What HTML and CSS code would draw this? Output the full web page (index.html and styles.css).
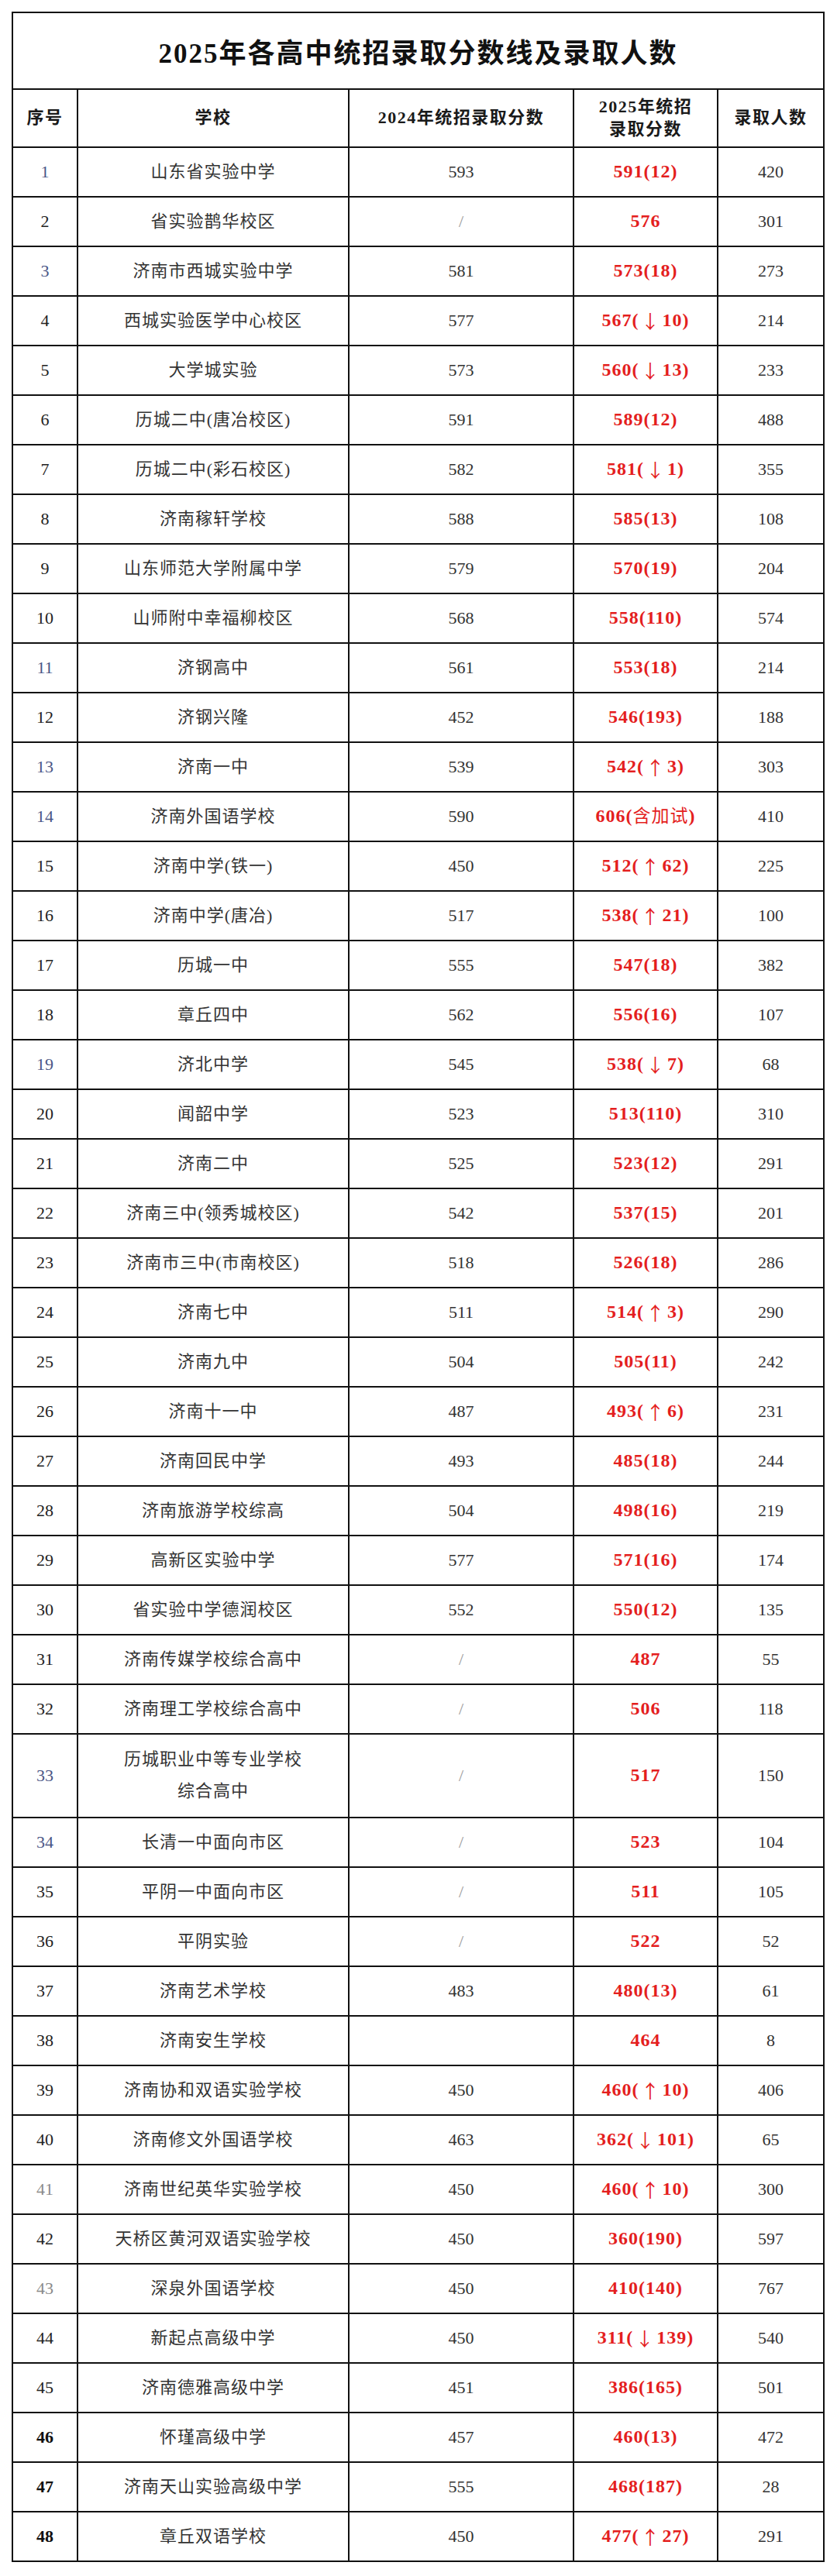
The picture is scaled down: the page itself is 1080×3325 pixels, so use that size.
FILE: index.html
```html
<!DOCTYPE html>
<html lang="zh-CN">
<head>
<meta charset="utf-8">
<title>2025年各高中统招录取分数线及录取人数</title>
<link rel="stylesheet" href="styles.css">
</head>
<body>
<div class="sheet">
  <div class="title">2025年各高中统招录取分数线及录取人数</div>
  <div class="row head">
    <div class="cell">序号</div>
    <div class="cell">学校</div>
    <div class="cell">2024年统招录取分数</div>
    <div class="cell">2025年统招<br>录取分数</div>
    <div class="cell">录取人数</div>
  </div>
  <div class="row"><div class="cell no blue">1</div><div class="cell name">山东省实验中学</div><div class="cell num">593</div><div class="cell red">591(12)</div><div class="cell num">420</div></div>
  <div class="row"><div class="cell no">2</div><div class="cell name">省实验鹊华校区</div><div class="cell slash">/</div><div class="cell red">576</div><div class="cell num">301</div></div>
  <div class="row"><div class="cell no blue">3</div><div class="cell name">济南市西城实验中学</div><div class="cell num">581</div><div class="cell red">573(18)</div><div class="cell num">273</div></div>
  <div class="row"><div class="cell no">4</div><div class="cell name">西城实验医学中心校区</div><div class="cell num">577</div><div class="cell red">567(<span class="arrow">↓</span>10)</div><div class="cell num">214</div></div>
  <div class="row"><div class="cell no">5</div><div class="cell name">大学城实验</div><div class="cell num">573</div><div class="cell red">560(<span class="arrow">↓</span>13)</div><div class="cell num">233</div></div>
  <div class="row"><div class="cell no">6</div><div class="cell name">历城二中(唐冶校区)</div><div class="cell num">591</div><div class="cell red">589(12)</div><div class="cell num">488</div></div>
  <div class="row"><div class="cell no">7</div><div class="cell name">历城二中(彩石校区)</div><div class="cell num">582</div><div class="cell red">581(<span class="arrow">↓</span>1)</div><div class="cell num">355</div></div>
  <div class="row"><div class="cell no">8</div><div class="cell name">济南稼轩学校</div><div class="cell num">588</div><div class="cell red">585(13)</div><div class="cell num">108</div></div>
  <div class="row"><div class="cell no">9</div><div class="cell name">山东师范大学附属中学</div><div class="cell num">579</div><div class="cell red">570(19)</div><div class="cell num">204</div></div>
  <div class="row"><div class="cell no">10</div><div class="cell name">山师附中幸福柳校区</div><div class="cell num">568</div><div class="cell red">558(110)</div><div class="cell num">574</div></div>
  <div class="row"><div class="cell no blue">11</div><div class="cell name">济钢高中</div><div class="cell num">561</div><div class="cell red">553(18)</div><div class="cell num">214</div></div>
  <div class="row"><div class="cell no">12</div><div class="cell name">济钢兴隆</div><div class="cell num">452</div><div class="cell red">546(193)</div><div class="cell num">188</div></div>
  <div class="row"><div class="cell no blue">13</div><div class="cell name">济南一中</div><div class="cell num">539</div><div class="cell red">542(<span class="arrow">↑</span>3)</div><div class="cell num">303</div></div>
  <div class="row"><div class="cell no blue">14</div><div class="cell name">济南外国语学校</div><div class="cell num">590</div><div class="cell red">606(<span class="cjk">含加试</span>)</div><div class="cell num">410</div></div>
  <div class="row"><div class="cell no">15</div><div class="cell name">济南中学(铁一)</div><div class="cell num">450</div><div class="cell red">512(<span class="arrow">↑</span>62)</div><div class="cell num">225</div></div>
  <div class="row"><div class="cell no">16</div><div class="cell name">济南中学(唐冶)</div><div class="cell num">517</div><div class="cell red">538(<span class="arrow">↑</span>21)</div><div class="cell num">100</div></div>
  <div class="row"><div class="cell no">17</div><div class="cell name">历城一中</div><div class="cell num">555</div><div class="cell red">547(18)</div><div class="cell num">382</div></div>
  <div class="row"><div class="cell no">18</div><div class="cell name">章丘四中</div><div class="cell num">562</div><div class="cell red">556(16)</div><div class="cell num">107</div></div>
  <div class="row"><div class="cell no blue">19</div><div class="cell name">济北中学</div><div class="cell num">545</div><div class="cell red">538(<span class="arrow">↓</span>7)</div><div class="cell num">68</div></div>
  <div class="row"><div class="cell no">20</div><div class="cell name">闻韶中学</div><div class="cell num">523</div><div class="cell red">513(110)</div><div class="cell num">310</div></div>
  <div class="row"><div class="cell no">21</div><div class="cell name">济南二中</div><div class="cell num">525</div><div class="cell red">523(12)</div><div class="cell num">291</div></div>
  <div class="row"><div class="cell no">22</div><div class="cell name">济南三中(领秀城校区)</div><div class="cell num">542</div><div class="cell red">537(15)</div><div class="cell num">201</div></div>
  <div class="row"><div class="cell no">23</div><div class="cell name">济南市三中(市南校区)</div><div class="cell num">518</div><div class="cell red">526(18)</div><div class="cell num">286</div></div>
  <div class="row"><div class="cell no">24</div><div class="cell name">济南七中</div><div class="cell num">511</div><div class="cell red">514(<span class="arrow">↑</span>3)</div><div class="cell num">290</div></div>
  <div class="row"><div class="cell no">25</div><div class="cell name">济南九中</div><div class="cell num">504</div><div class="cell red">505(11)</div><div class="cell num">242</div></div>
  <div class="row"><div class="cell no">26</div><div class="cell name">济南十一中</div><div class="cell num">487</div><div class="cell red">493(<span class="arrow">↑</span>6)</div><div class="cell num">231</div></div>
  <div class="row"><div class="cell no">27</div><div class="cell name">济南回民中学</div><div class="cell num">493</div><div class="cell red">485(18)</div><div class="cell num">244</div></div>
  <div class="row"><div class="cell no">28</div><div class="cell name">济南旅游学校综高</div><div class="cell num">504</div><div class="cell red">498(16)</div><div class="cell num">219</div></div>
  <div class="row"><div class="cell no">29</div><div class="cell name">高新区实验中学</div><div class="cell num">577</div><div class="cell red">571(16)</div><div class="cell num">174</div></div>
  <div class="row"><div class="cell no">30</div><div class="cell name">省实验中学德润校区</div><div class="cell num">552</div><div class="cell red">550(12)</div><div class="cell num">135</div></div>
  <div class="row"><div class="cell no">31</div><div class="cell name">济南传媒学校综合高中</div><div class="cell slash">/</div><div class="cell red">487</div><div class="cell num">55</div></div>
  <div class="row"><div class="cell no">32</div><div class="cell name">济南理工学校综合高中</div><div class="cell slash">/</div><div class="cell red">506</div><div class="cell num">118</div></div>
  <div class="row tall"><div class="cell no blue">33</div><div class="cell name">历城职业中等专业学校<br>综合高中</div><div class="cell slash">/</div><div class="cell red">517</div><div class="cell num">150</div></div>
  <div class="row"><div class="cell no blue">34</div><div class="cell name">长清一中面向市区</div><div class="cell slash">/</div><div class="cell red">523</div><div class="cell num">104</div></div>
  <div class="row"><div class="cell no">35</div><div class="cell name">平阴一中面向市区</div><div class="cell slash">/</div><div class="cell red">511</div><div class="cell num">105</div></div>
  <div class="row"><div class="cell no">36</div><div class="cell name">平阴实验</div><div class="cell slash">/</div><div class="cell red">522</div><div class="cell num">52</div></div>
  <div class="row"><div class="cell no">37</div><div class="cell name">济南艺术学校</div><div class="cell num">483</div><div class="cell red">480(13)</div><div class="cell num">61</div></div>
  <div class="row"><div class="cell no">38</div><div class="cell name">济南安生学校</div><div class="cell num"></div><div class="cell red">464</div><div class="cell num">8</div></div>
  <div class="row"><div class="cell no">39</div><div class="cell name">济南协和双语实验学校</div><div class="cell num">450</div><div class="cell red">460(<span class="arrow">↑</span>10)</div><div class="cell num">406</div></div>
  <div class="row"><div class="cell no">40</div><div class="cell name">济南修文外国语学校</div><div class="cell num">463</div><div class="cell red">362(<span class="arrow">↓</span>101)</div><div class="cell num">65</div></div>
  <div class="row"><div class="cell no gray">41</div><div class="cell name">济南世纪英华实验学校</div><div class="cell num">450</div><div class="cell red">460(<span class="arrow">↑</span>10)</div><div class="cell num">300</div></div>
  <div class="row"><div class="cell no">42</div><div class="cell name">天桥区黄河双语实验学校</div><div class="cell num">450</div><div class="cell red">360(190)</div><div class="cell num">597</div></div>
  <div class="row"><div class="cell no gray">43</div><div class="cell name">深泉外国语学校</div><div class="cell num">450</div><div class="cell red">410(140)</div><div class="cell num">767</div></div>
  <div class="row"><div class="cell no">44</div><div class="cell name">新起点高级中学</div><div class="cell num">450</div><div class="cell red">311(<span class="arrow">↓</span>139)</div><div class="cell num">540</div></div>
  <div class="row"><div class="cell no">45</div><div class="cell name">济南德雅高级中学</div><div class="cell num">451</div><div class="cell red">386(165)</div><div class="cell num">501</div></div>
  <div class="row"><div class="cell no bold">46</div><div class="cell name">怀瑾高级中学</div><div class="cell num">457</div><div class="cell red">460(13)</div><div class="cell num">472</div></div>
  <div class="row"><div class="cell no bold">47</div><div class="cell name">济南天山实验高级中学</div><div class="cell num">555</div><div class="cell red">468(187)</div><div class="cell num">28</div></div>
  <div class="row"><div class="cell no bold">48</div><div class="cell name">章丘双语学校</div><div class="cell num">450</div><div class="cell red">477(<span class="arrow">↑</span>27)</div><div class="cell num">291</div></div>
</div>
</body>
</html>
```

FILE: styles.css
```css
html, body {
  margin: 0;
  padding: 0;
  background: #ffffff;
}

body {
  font-family: "Liberation Serif", "Noto Sans CJK SC", serif;
  color: #333333;
}

.sheet {
  box-sizing: border-box;
  width: 1049px;
  margin: 15px 0 0 15px;
  padding: 2px;
  background: #111111;
  display: flex;
  flex-direction: column;
  gap: 2px;
}

.title {
  height: 97px;
  background: #ffffff;
  display: flex;
  align-items: center;
  justify-content: center;
  font-size: 35px;
  letter-spacing: 2px;
  font-weight: 600;
  color: #111111;
}

.row {
  display: grid;
  grid-template-columns: 82px 348px 288px 184px 135px;
  gap: 2px;
  height: 62px;
}

.row.tall {
  height: 106px;
}

.row.head {
  height: 73px;
}

.cell {
  background: #ffffff;
  display: flex;
  align-items: center;
  justify-content: center;
  text-align: center;
  font-size: 22px;
  line-height: 1.3;
}

.head .cell {
  font-weight: 600;
  color: #1a1a1a;
  letter-spacing: 1.5px;
}

.no {
  color: #222222;
}

.no.blue {
  color: #4a5686;
}

.no.gray {
  color: #8a8a8a;
}

.no.bold {
  font-weight: 700;
  color: #111111;
}

.name {
  letter-spacing: 1px;
  color: #333333;
  line-height: 1.85;
}

.num {
  color: #333333;
}

.slash {
  color: #9a9a9a;
  font-size: 22px;
}

.red {
  color: #e41e1e;
  font-weight: 700;
  font-size: 24px;
  letter-spacing: 1px;
}

.red .cjk {
  font-weight: 400;
  font-size: 23px;
  letter-spacing: 1px;
}

.arrow {
  display: inline-block;
  width: 30px;
  text-align: center;
  font-family: "Noto Sans CJK SC", sans-serif;
  font-weight: 400;
}
```
